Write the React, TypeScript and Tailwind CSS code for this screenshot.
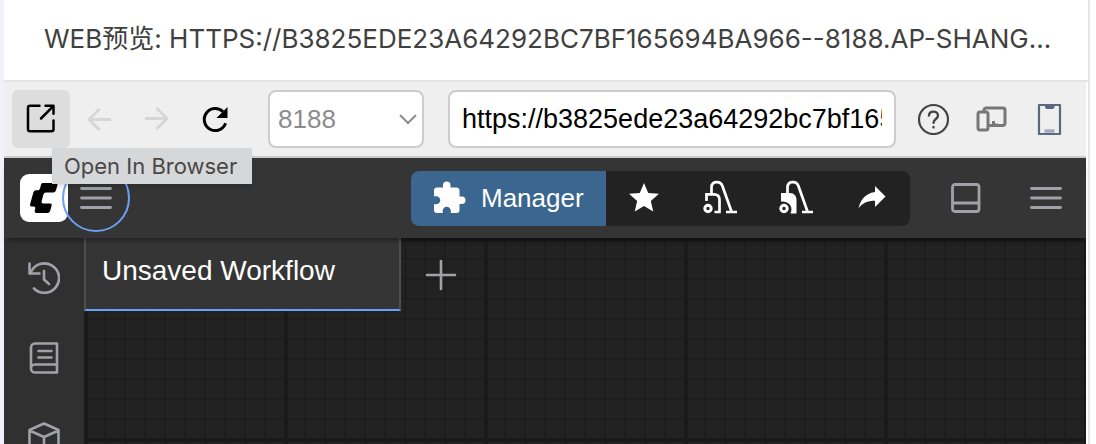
import React from "react";

type IconProps = { className?: string };

const prime = {
  fill: "none",
  stroke: "currentColor",
  strokeLinecap: "round" as const,
  strokeLinejoin: "round" as const,
  "aria-hidden": true,
};

function OpenIcon() {
  return (
    <svg className="size-8" viewBox="0 0 32 32" {...prime} strokeWidth="2.5">
      <path d="M14.500 2.800H5a2 2 0 0 0-2 2v21.400a2 2 0 0 0 2 2h21.500a2 2 0 0 0 2-2V17.500" />
      <path d="M20.500 2.800h8v8M28 3.300 16 15.500" />
    </svg>
  );
}

function ArrowIcon({ className = "" }: IconProps) {
  return (
    <svg className={"size-8 " + className} viewBox="0 0 32 32" fill="none" stroke="currentColor" strokeWidth="2.8" aria-hidden>
      <path d="M28 16.500H7M16.500 6 6 16.500 16.500 27" />
    </svg>
  );
}

function ReloadIcon() {
  return (
    <svg className="size-8" viewBox="0 0 32 32" fill="none" stroke="currentColor" aria-hidden>
      <path strokeWidth="3" d="M26.600 20.300A11 11 0 1 1 24 8.700" />
      <path fill="currentColor" stroke="none" d="M28.500 4v11h-11z" />
    </svg>
  );
}

function HelpIcon() {
  return (
    <svg className="size-8" viewBox="0 0 32 32" {...prime} strokeWidth="2.2">
      <circle cx="16.500" cy="16.500" r="14.500" />
      <path strokeWidth="2.4" d="M12 12.500c.3-5.300 9-5 9 0 0 3.300-4.500 3.700-4.500 7.300M16.500 24v.4" />
    </svg>
  );
}

function DevicesIcon() {
  return (
    <svg className="size-8" viewBox="0 0 32 32" {...prime} strokeWidth="3">
      <rect x="3" y="9" width="10" height="18" rx="2" />
      <path d="M9 8V6.500a2 2 0 0 1 2-1.500h17a2 2 0 0 1 2 2v13a2.500 2.500 0 0 1-2.500 2.500H15" />
      <path fill="currentColor" stroke="none" d="M17 18h3v2.500h3V23h-6z" />
    </svg>
  );
}

function PhoneIcon() {
  return (
    <svg className="size-8" viewBox="0 0 32 32" {...prime} strokeWidth="2.2">
      <rect x="6" y="2" width="21" height="29" />
      <path fill="currentColor" stroke="none" d="M12 2h9.500v2.500L20 6h-6.500L12 4.500z" />
      <path stroke="#a4abb8" strokeWidth="3.500" strokeLinecap="butt" d="M11.500 28h10" />
    </svg>
  );
}

function ComfyLogo() {
  return (
    <svg className="size-12" viewBox="0 0 48 48" aria-hidden>
      <rect width="48" height="48" rx="9" fill="#fff" />
      <path
        fill="#000"
        d="M22.500 9H36q2 0 1.500 2l-1.600 5.500q-.6 2-2.600 2H26q-2 0-2.600 2L21.700 27q-.6 2.500 1.600 2.500H30q2.200 0 1.600 2.200l-1.500 5.300q-.6 2-2.600 2H16.500q-2.200 0-1.800-2.200l.6-2.300q.4-2-1.600-2H11.500q-2 0-1.400-2.200l3.300-12q.6-2 2.600-2h2q1.600 0 2-1.700l.8-3Q21 9 22.500 9z"
      />
    </svg>
  );
}

function BarsIcon() {
  return (
    <svg className="size-8" viewBox="0 0 32 32" {...prime} strokeWidth="2.8">
      <path d="M1.500 6.500h29M1.500 16h29M1.500 25.500h29" />
    </svg>
  );
}

function PuzzleIcon() {
  return (
    <svg className="size-9" viewBox="0 0 24 24" fill="currentColor" aria-hidden>
      <path d="M20.500,11H19V7C19,5.890 18.100,5 17,5H13V3.500A2.500,2.500 0 0,0 10.500,1A2.500,2.500 0 0,0 8,3.500V5H4A2,2 0 0,0 2,7V10.800H3.500C5,10.800 6.200,12 6.200,13.500C6.200,15 5,16.200 3.500,16.200H2V20A2,2 0 0,0 4,22H7.800V20.500C7.800,19 9,17.800 10.500,17.800C12,17.800 13.200,19 13.200,20.500V22H17A2,2 0 0,0 19,20V16H20.500A2.500,2.500 0 0,0 23,13.500A2.500,2.500 0 0,0 20.500,11Z" />
    </svg>
  );
}

function StarIcon() {
  return (
    <svg className="size-9" viewBox="0 0 24 24" fill="currentColor" aria-hidden>
      <path d="M12,17.270L18.180,21L16.540,13.970L22,9.240L14.810,8.620L12,2L9.190,8.620L2,9.240L7.450,13.970L5.820,21L12,17.270Z" />
    </svg>
  );
}

function ShareIcon() {
  return (
    <svg className="size-9" viewBox="0 0 24 24" fill="currentColor" aria-hidden>
      <path d="M21,11L14,4V8C7,9 4,14 3,19C5.500,15.500 9,13.900 14,13.900V18L21,11Z" />
    </svg>
  );
}

function VacuumIcon({ filled = false }: { filled?: boolean }) {
  return (
    <svg className="size-9" viewBox="0 0 36 36" fill="none" stroke="currentColor" strokeWidth="2.700" aria-hidden>
      <circle cx="6" cy="28.500" r="3.200" strokeWidth="3" />
      <path d="M9.500 14V7.500C9.500.8 18.500.5 20.500 6.200L29.500 31.500M24 32h11" />
      {filled ? (
        <path fill="currentColor" stroke="none" d="M3 13h9c4 0 6.500 3 6.500 6.500v13.900H12.500C15.500 27 11.500 21 3 21.500z" />
      ) : (
        <path d="M4.500 21v-6.600H12q5.500 0 5.500 5.600v12h-5" />
      )}
    </svg>
  );
}

function PanelIcon() {
  return (
    <svg className="size-8" viewBox="0 0 32 32" {...prime} strokeWidth="2.800">
      <rect x="2.500" y="2.500" width="26.500" height="27" rx="2.500" />
      <path d="M3 21h26" />
    </svg>
  );
}

function HistoryIcon() {
  return (
    <svg className="size-8" viewBox="0 0 32 32" {...prime} strokeWidth="2.600">
      <path d="M1.500 1.500v10h10M3 10A14.700 14.700 0 1 1 6 26.500" />
      <path d="M16 9v8.500l5 4.500" />
    </svg>
  );
}

function BookIcon() {
  return (
    <svg className="size-8" viewBox="0 0 32 32" {...prime} strokeWidth="2.600">
      <path d="M29 1.500H7a4 4 0 0 0-4 4v21a4 4 0 0 0 4 4h22zM29 22.500H7a4 4 0 0 0 0 8M10.500 9h13M10.500 15.500h13" />
    </svg>
  );
}

function BoxIcon() {
  return (
    <svg className="size-8" viewBox="0 0 32 32" {...prime} strokeWidth="2.600">
      <path d="M16 1.500 30.500 8v16L16 30.500 1.500 24V8zM1.500 8.500 16 15l14.500-6.500M16 15v15" />
    </svg>
  );
}

const sideItems = [
  { label: "Queue", icon: <HistoryIcon /> },
  { label: "Node Library", icon: <BookIcon /> },
  { label: "Model Library", icon: <BoxIcon /> },
];

const actions = [
  { label: "Favorites", icon: <StarIcon /> },
  { label: "Unload Models", icon: <VacuumIcon /> },
  { label: "Free model and node cache", icon: <VacuumIcon filled /> },
  { label: "Share", icon: <ShareIcon /> },
];

const toolButton = "flex size-[58px] shrink-0 items-center justify-center rounded-md";

function PreviewToolbar() {
  return (
    <div className="flex shrink-0 items-center border-b-2 border-[#cccccc] bg-[#efefef] py-2 pl-2 pr-2">
      <div className="relative">
        <button aria-label="Open In Browser" aria-describedby="open-tip" className={toolButton + " bg-[#dddddd] text-black"}>
          <OpenIcon />
        </button>
        <div
          id="open-tip"
          role="tooltip"
          className="absolute left-10 top-[58px] z-10 flex h-9 w-[200px] items-center whitespace-nowrap bg-[#d5d7d9] px-3 font-[Inter,sans-serif] text-[22px] leading-7 text-[#484848] shadow-md"
        >
          Open In Browser
        </div>
      </div>
      <button aria-label="Back" disabled className={toolButton + " text-[#d6d6d6]"}>
        <ArrowIcon />
      </button>
      <button aria-label="Forward" disabled className={toolButton + " text-[#d6d6d6]"}>
        <ArrowIcon className="rotate-180" />
      </button>
      <button aria-label="Reload" className={toolButton + " text-black"}>
        <ReloadIcon />
      </button>
      <div className="relative ml-6 shrink-0">
        <select
          aria-label="Port"
          disabled
          className="block h-[58px] w-[156px] appearance-none rounded-lg border-2 border-[#cccccc] bg-white pl-2 text-[26px] text-[#8c8c8c] opacity-100"
        >
          <option>8188</option>
        </select>
        <svg
          className="pointer-events-none absolute right-1.5 top-5 h-4 w-5"
          viewBox="0 0 20 16"
          fill="none"
          stroke="#8c8c8c"
          strokeWidth="2"
          aria-hidden
        >
          <path d="M2 5l8 8 8-8" />
        </svg>
      </div>
      <input
        aria-label="Address"
        defaultValue="https://b3825ede23a64292bc7bf165694ba966--8188.ap-shang"
        className="ml-6 mr-2 h-[58px] min-w-0 flex-1 rounded-lg border-2 border-[#cccccc] bg-white px-3 text-[27px] text-black"
      />
      <button aria-label="Help" className={toolButton + " text-[#444444]"}>
        <HelpIcon />
      </button>
      <button aria-label="Devices" className={toolButton + " text-[#777777]"}>
        <DevicesIcon />
      </button>
      <button aria-label="Phone view" className={toolButton + " text-[#5b6880]"}>
        <PhoneIcon />
      </button>
    </div>
  );
}

function TopBar() {
  return (
    <header className="z-[1] flex h-20 shrink-0 items-center bg-[#353535] pl-4 pr-2 shadow-[0_5px_5px_-3px_rgba(0,0,0,0.4)]">
      <ComfyLogo />
      <button
        aria-label="Menu"
        className="-ml-1.5 flex size-[68px] items-center justify-center rounded-full border-2 border-[#6ca0f6] text-[#a1a1aa]"
      >
        <BarsIcon />
      </button>
      <div className="ml-auto flex h-[55px] overflow-hidden rounded-lg bg-[#222222] text-white">
        <button className="flex w-[195px] items-center gap-3.5 bg-[#3a668f] pl-5 text-[26px] font-medium">
          <PuzzleIcon />
          Manager
        </button>
        {actions.map((a) => (
          <button key={a.label} aria-label={a.label} className="flex w-[76px] items-center justify-center">
            {a.icon}
          </button>
        ))}
      </div>
      <button aria-label="Toggle bottom panel" className="ml-4 flex size-20 items-center justify-center text-[#a1a1aa]">
        <PanelIcon />
      </button>
      <button aria-label="Hide menu" className="flex h-20 w-[72px] items-center justify-end pr-4 text-[#a1a1aa]">
        <BarsIcon />
      </button>
    </header>
  );
}

function Workspace() {
  return (
    <div className="flex min-h-0 flex-1">
      <nav className="flex w-20 shrink-0 flex-col overflow-hidden bg-[#303030] text-[#a1a1aa]">
        {sideItems.map((s) => (
          <button key={s.label} aria-label={s.label} className="flex h-20 shrink-0 items-center justify-center">
            {s.icon}
          </button>
        ))}
      </nav>
      <main className="flex min-w-0 flex-1 items-start bg-[#222222] bg-[linear-gradient(90deg,#1a1a1a_4px,transparent_4px),linear-gradient(#1a1a1a_4px,transparent_4px),linear-gradient(90deg,#1d1d1d_2px,transparent_2px),linear-gradient(#1d1d1d_2px,transparent_2px)] bg-[size:200px_200px,200px_200px,20px_20px,20px_20px]">
        <button className="flex h-[73px] w-[317px] items-center border-x-2 border-b-2 border-x-[#4e4e4e] border-b-[#6ca0f6] bg-[#353535] px-4 pb-1.5 text-[28px] text-white">
          Unsaved Workflow
        </button>
        <button aria-label="New workflow" className="flex h-[73px] w-20 items-center justify-center text-[#a1a1aa]">
          <svg className="size-8" viewBox="0 0 32 32" {...prime} strokeWidth="2.600">
            <path d="M16 2v28M2 16h28" />
          </svg>
        </button>
      </main>
    </div>
  );
}

export default function App() {
  return (
    <div className="h-screen overflow-hidden bg-white pr-1.5 font-['Liberation_Sans',sans-serif]">
      <div className="flex h-full flex-col border-l-4 border-r-2 border-l-[#eff2fd] border-r-[#e5e5e5]">
        <h1 className="h-[82px] shrink-0 overflow-hidden whitespace-nowrap border-b-2 border-[#e4e4e4] pl-10 font-[Inter,'Noto_Sans_CJK_SC',sans-serif] text-[26px] leading-[78px] text-[#404040]">
          WEB预览: HTTPS://B3825EDE23A64292BC7BF165694BA966--8188.AP-SHANG...
        </h1>
        <div className="mr-0.5 flex min-h-0 flex-1 flex-col">
          <PreviewToolbar />
          <TopBar />
          <Workspace />
        </div>
      </div>
    </div>
  );
}
